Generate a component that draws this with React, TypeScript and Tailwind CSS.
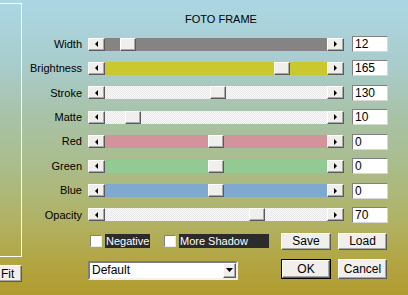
import React from "react";

type Slider = {
  label: string;
  value: number;
  thumb: number;
  track: string;
};

const sliders: Slider[] = [
  { label: "Width", value: 12, thumb: 15, track: "bg-[#848484]" },
  { label: "Brightness", value: 165, thumb: 169, track: "bg-[#c9c82e]" },
  { label: "Stroke", value: 130, thumb: 105, track: "dots" },
  { label: "Matte", value: 10, thumb: 20, track: "dots" },
  { label: "Red", value: 0, thumb: 103, track: "bg-[#d3939a]" },
  { label: "Green", value: 0, thumb: 103, track: "bg-[#93c993]" },
  { label: "Blue", value: 0, thumb: 103, track: "bg-[#80a9cf]" },
  { label: "Opacity", value: 70, thumb: 144, track: "dots" },
];

const raised =
  "bg-[#f0efec] border border-t-white border-l-white border-r-[#5a5a5a] border-b-[#5a5a5a] shadow-[inset_-1px_-1px_0_#a8a8a8]";

function Arrow({ dir }: { dir: "left" | "right" | "down" }) {
  const pts =
    dir === "left" ? "4,0 4,6 1,3" : dir === "right" ? "1,0 1,6 4,3" : "0,1 7,1 3.5,5";
  const w = dir === "down" ? 7 : 5;
  return (
    <svg width={w} height={6} viewBox={`0 0 ${w} 6`}>
      <polygon points={pts} fill="#000" />
    </svg>
  );
}

function ScrollBar({ s }: { s: Slider }) {
  const isDots = s.track === "dots";
  return (
    <div className="flex h-[13px] w-[256px]">
      <div className={`${raised} w-[17px] h-full flex items-center justify-center`}>
        <Arrow dir="left" />
      </div>
      <div
        className={`relative flex-1 h-full ${
          isDots
            ? "bg-[#f7f7f7] bg-[repeating-conic-gradient(#e6e6e6_0_25%,#fbfbfb_0_50%)] bg-[length:2px_2px]"
            : s.track
        }`}
      >
        <div className={`${raised} absolute top-0 h-full w-[16px]`} style={{ left: s.thumb }} />
      </div>
      <div className={`${raised} w-[17px] h-full flex items-center justify-center`}>
        <Arrow dir="right" />
      </div>
    </div>
  );
}

function Button({
  label,
  def,
  className,
  inner = "justify-center",
}: {
  label: string;
  def?: boolean;
  className: string;
  inner?: string;
}) {
  return (
    <div className={`${def ? "border border-black" : ""} ${className}`}>
      <div className={`${raised} w-full h-full flex items-center ${inner} text-[12px] text-black`}>
        {label}
      </div>
    </div>
  );
}

function CheckBox() {
  return (
    <div className="w-[12px] h-[12px] bg-white border border-t-[#808080] border-l-[#808080] border-r-[#e8e8e8] border-b-[#e8e8e8]" />
  );
}

export default function App() {
  return (
    <div className="relative w-[408px] h-[295px] overflow-hidden flex font-['Liberation_Sans',sans-serif] text-[11px] text-black bg-[linear-gradient(to_bottom,#abd7e4_0%,#a9cccc_22%,#a8c2a6_40%,#aabd8e_55%,#b0b264_75%,#b3a440_90%,#b09c30_100%)]">
      {/* left preview panel */}
      <div className="flex flex-col w-[22px] shrink-0">
        <div className="mt-[3px] -ml-[10px] w-[32px] h-[254px] border border-white" />
        <Button
          label="Fit"
          inner="justify-start pl-[8px]"
          className="mt-[8px] -ml-[8px] w-[30px] h-[17px]"
        />
      </div>

      <div className="flex flex-col flex-1">
        <div className="mt-[12px] pl-[12px] h-[14px] leading-[14px] text-center text-[11px]">FOTO FRAME</div>

        <div className="mt-[10px] flex flex-col gap-[8.43px]">
          {sliders.map((s) => (
            <div key={s.label} className="flex items-center h-[16px]">
              <div className="w-[60px] text-right">{s.label}</div>
              <div className="ml-[6px]">
                <ScrollBar s={s} />
              </div>
              <div className="ml-[8px] w-[36px] h-[16px] bg-white border border-t-[#808080] border-l-[#808080] border-r-[#d8d8d8] border-b-[#d8d8d8] pl-[2px] text-[12px] leading-[14px]">
                {s.value}
              </div>
            </div>
          ))}
        </div>

        <div className="mt-[10px] ml-[66px] flex">
          <div className="flex flex-col w-[193px]">
            <div className="flex items-center h-[17px]">
              <div className="ml-[2px]">
                <CheckBox />
              </div>
              <div className="ml-[3px] h-[14px] w-[45px] bg-[#2b2b2b] text-white px-[1px] leading-[14px]">Negative</div>
              <div className="ml-[14px]">
                <CheckBox />
              </div>
              <div className="ml-[3px] h-[14px] w-[90px] bg-[#2b2b2b] text-white px-[1px] leading-[14px]">More Shadow</div>
            </div>
            <div className="mt-[11px] w-[150px] h-[19px] bg-white border-2 border-t-[#7c7c7c] border-l-[#7c7c7c] border-r-[#f0f0f0] border-b-[#f0f0f0] flex items-center">
              <div className="flex-1 pl-[2px] text-[12px]">Default</div>
              <div className={`${raised} w-[13px] h-full flex items-center justify-center`}>
                <Arrow dir="down" />
              </div>
            </div>
          </div>

          <div className="grid grid-cols-[50px_49px] gap-x-[7px]">
            <Button label="Save" className="h-[17px]" />
            <Button label="Load" className="h-[17px]" />
            <Button label="OK" def className="mt-[8px] h-[20px]" />
            <Button label="Cancel" className="mt-[8px] h-[20px]" />
          </div>
        </div>
      </div>
    </div>
  );
}
